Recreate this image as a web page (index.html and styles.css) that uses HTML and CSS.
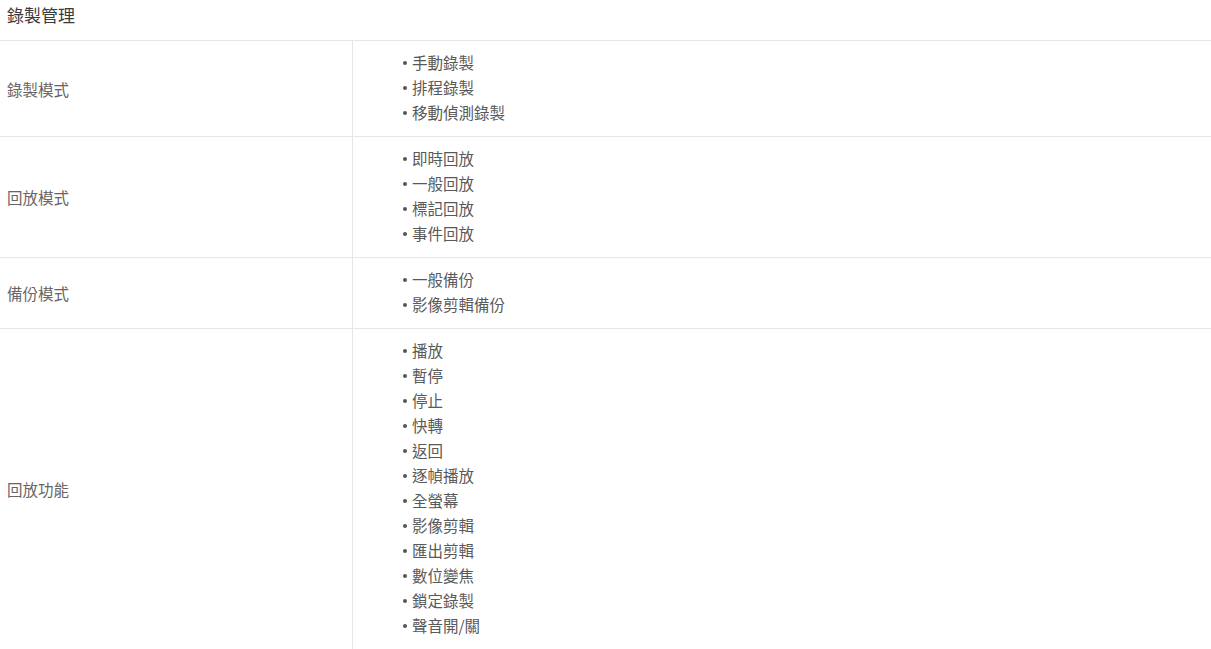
FILE: index.html
```html
<!DOCTYPE html>
<html lang="zh-Hant">
<head>
<meta charset="utf-8">
<title>錄製管理</title>
<link rel="stylesheet" href="styles.css">
</head>
<body>
<div class="spec">
  <h2 class="spec-title">錄製管理</h2>
  <table class="spec-table">
    <tr>
      <th class="spec-label">錄製模式</th>
      <td class="spec-value">
        <ul class="spec-list">
          <li>手動錄製</li>
          <li>排程錄製</li>
          <li>移動偵測錄製</li>
        </ul>
      </td>
    </tr>
    <tr>
      <th class="spec-label">回放模式</th>
      <td class="spec-value">
        <ul class="spec-list">
          <li>即時回放</li>
          <li>一般回放</li>
          <li>標記回放</li>
          <li>事件回放</li>
        </ul>
      </td>
    </tr>
    <tr>
      <th class="spec-label">備份模式</th>
      <td class="spec-value">
        <ul class="spec-list">
          <li>一般備份</li>
          <li>影像剪輯備份</li>
        </ul>
      </td>
    </tr>
    <tr>
      <th class="spec-label">回放功能</th>
      <td class="spec-value">
        <ul class="spec-list">
          <li>播放</li>
          <li>暫停</li>
          <li>停止</li>
          <li>快轉</li>
          <li>返回</li>
          <li>逐幀播放</li>
          <li>全螢幕</li>
          <li>影像剪輯</li>
          <li>匯出剪輯</li>
          <li>數位變焦</li>
          <li>鎖定錄製</li>
          <li>聲音開/關</li>
        </ul>
      </td>
    </tr>
  </table>
</div>
</body>
</html>
```

FILE: styles.css
```css
html, body {
  margin: 0;
  padding: 0;
  background: #fff;
}
body {
  font-family: "Noto Sans CJK TC", "Noto Sans", sans-serif;
  color: #555;
}
.spec-title {
  margin: 0;
  height: 41px;
  box-sizing: border-box;
  padding: 2px 7px 0;
  font-size: 17px;
  font-weight: 400;
  line-height: 26px;
  color: #3a3a3a;
  border-bottom: 1px solid #e6e6e6;
}
.spec-table {
  width: 100%;
  border-collapse: collapse;
}
.spec-table tr {
  border-bottom: 1px solid #e6e6e6;
}
.spec-label {
  width: 345px;
  padding: 0 0 0 7px;
  text-align: left;
  font-weight: 400;
  font-size: 15.5px;
  color: #666;
  border-right: 1px solid #e6e6e6;
  vertical-align: middle;
}
.spec-value {
  padding: 9px 0 11px 49px;
  vertical-align: middle;
}
.spec-list {
  list-style: none;
  margin: 0;
  padding: 0;
  font-size: 15.5px;
  line-height: 25px;
  color: #595959;
}
.spec-list li {
  display: flex;
  align-items: center;
}
.spec-list li::before {
  content: "";
  flex: none;
  width: 4px;
  height: 4px;
  margin: 1px 5px 0 1px;
  border-radius: 50%;
  background: #555;
}
```
